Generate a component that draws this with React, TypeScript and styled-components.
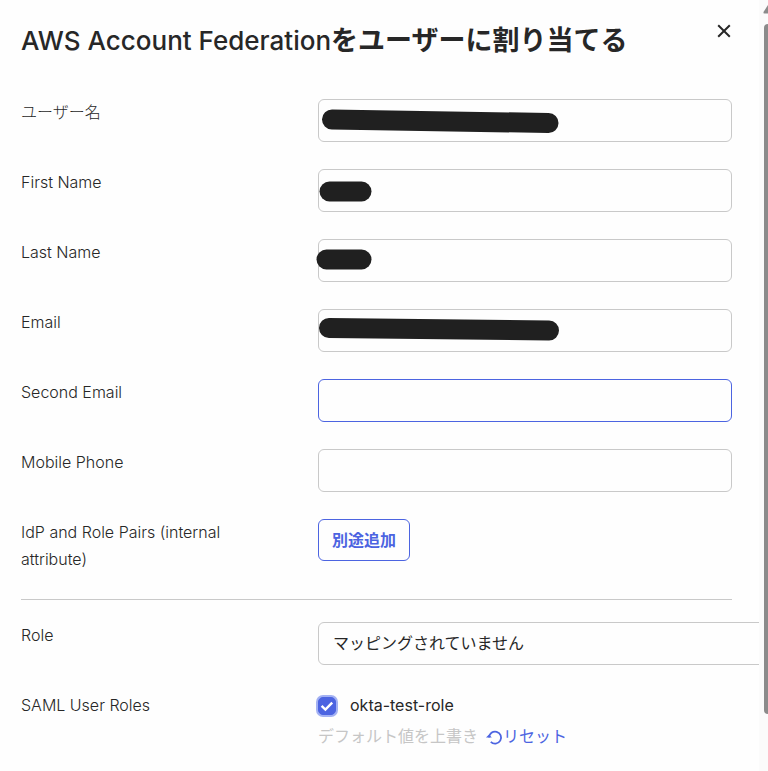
import React from "react";
import styled, { createGlobalStyle, css } from "styled-components";

const GlobalStyle = createGlobalStyle`
  *, *::before, *::after { box-sizing: border-box; }
  body {
    margin: 0;
    background: #fefefe;
    color: #272727;
    font-family: Inter, "Noto Sans CJK JP", sans-serif;
    font-size: 16px;
    line-height: 27px;
    overflow: hidden;
  }
  button, input, select { font: inherit; color: inherit; }
`;

const Page = styled.div`
  display: flex;
  height: 100vh;
  overflow: hidden;
`;

const Dialog = styled.main`
  flex: 1;
  min-width: 0;
  padding: 21px 27px 0 21px;
  overflow: hidden;
`;

const Header = styled.header`
  display: flex;
  justify-content: space-between;
  align-items: flex-start;
  margin-bottom: 38px;
`;

const Title = styled.h1`
  margin: 0;
  font-size: 26px;
  line-height: 40px;
  font-weight: 500;
  white-space: nowrap;
`;

const TitleStrong = styled.span`
  font-size: 27px;
  font-weight: 700;
`;

const CloseButton = styled.button`
  display: flex;
  padding: 3px 1px;
  border: 0;
  background: none;
  cursor: pointer;
`;

const Fields = styled.div`
  display: grid;
  gap: 27px;
`;

const Row = styled.div`
  display: grid;
  grid-template-columns: 297px minmax(0, 1fr);
  align-items: start;
`;

const labelText = css`
  padding-right: 32px;
  font-weight: 300;
`;

const Label = styled.label`
  ${labelText}
`;

const GroupLabel = styled.span`
  ${labelText}
`;

const Control = styled.div`
  position: relative;
  display: flex;
`;

const TextInput = styled.input<{ $active?: boolean }>`
  width: 100%;
  height: 43px;
  padding: 0 14px;
  border: 1px solid ${(p) => (p.$active ? "#4c64e1" : "#c9c9c9")};
  border-radius: 6px;
  background: #fefefe;
  outline: none;
`;

const Marker = styled.svg`
  position: absolute;
  top: 0;
  left: -4px;
  width: 260px;
  height: 43px;
  pointer-events: none;
`;

const AddButton = styled.button`
  height: 42px;
  padding: 0 13px;
  border: 1px solid #4c64e1;
  border-radius: 6px;
  background: #fefefe;
  color: #4c64e1;
  font-weight: 700;
  cursor: pointer;
`;

const Divider = styled.hr`
  margin: 26px 0 22px;
  border: 0;
  border-top: 1px solid #c9c9c9;
`;

const RoleSelect = styled.select`
  flex: none;
  width: calc(100% + 60px);
  height: 43px;
  padding: 0 14px;
  border: 1px solid #c9c9c9;
  border-radius: 6px;
  background: #fefefe;
  appearance: none;
`;

const RoleOptions = styled.div`
  display: grid;
  gap: 4px;
`;

const CheckLabel = styled.label`
  display: flex;
  align-items: center;
  gap: 14px;
`;

const CheckWrap = styled.span`
  position: relative;
  display: flex;
`;

const Checkbox = styled.input`
  appearance: none;
  width: 18px;
  height: 18px;
  margin: 0;
  border: 1px solid #8c8c96;
  border-radius: 5px;
  box-shadow: 0 0 0 2px #a3b1f3;
  &:checked {
    border-color: #4c64e1;
    background: #4c64e1;
  }
`;

const CheckMark = styled.svg`
  position: absolute;
  inset: 0;
  pointer-events: none;
`;

const Override = styled.div`
  display: flex;
  gap: 8px;
  white-space: nowrap;
`;

const Muted = styled.span`
  color: #c6c6c6;
`;

const ResetLink = styled.a`
  display: flex;
  align-items: center;
  color: #4c64e1;
  text-decoration: none;
`;

const Track = styled.div`
  flex: none;
  display: flex;
  flex-direction: column;
  align-items: flex-end;
  width: 9px;
  background: #fbfbfb;
`;

const ArrowUp = styled.svg`
  flex: none;
  display: block;
  margin: 4px 0 10px;
`;

const Thumb = styled.div`
  flex: none;
  width: 4px;
  height: calc(90vh - 4px);
  border-radius: 4px 0 0 4px;
  background: #8b8b8b;
`;

type Stroke = { x1: number; y1: number; x2: number; y2: number };

type Field = { id: string; label: string; stroke?: Stroke; active?: boolean };

const fields: Field[] = [
  { id: "username", label: "ユーザー名", stroke: { x1: 18, y1: 20.5, x2: 234.5, y2: 24 } },
  { id: "first-name", label: "First Name", stroke: { x1: 15.5, y1: 22.5, x2: 47.5, y2: 22.5 } },
  { id: "last-name", label: "Last Name", stroke: { x1: 12.5, y1: 20.5, x2: 47.5, y2: 20.5 } },
  { id: "email", label: "Email", stroke: { x1: 15, y1: 19, x2: 235, y2: 21.5 } },
  { id: "second-email", label: "Second Email", active: true },
  { id: "mobile-phone", label: "Mobile Phone" },
];

export default function App() {
  return (
    <>
      <GlobalStyle />
      <Page>
        <Dialog>
          <Header>
            <Title>
              AWS Account Federation<TitleStrong>をユーザーに割り当てる</TitleStrong>
            </Title>
            <CloseButton type="button" aria-label="閉じる">
              <svg width="14" height="14" viewBox="0 0 14 14" fill="none" stroke="#272727" strokeWidth="2">
                <path d="M1.2 1.2 12.8 12.8M12.8 1.2 1.2 12.8" />
              </svg>
            </CloseButton>
          </Header>

          <Fields>
            {fields.map((f) => (
              <Row key={f.id}>
                <Label htmlFor={f.id}>{f.label}</Label>
                <Control>
                  <TextInput id={f.id} type="text" $active={f.active} />
                  {f.stroke && (
                    <Marker aria-hidden="true">
                      <line {...f.stroke} stroke="#202020" strokeWidth="20" strokeLinecap="round" />
                    </Marker>
                  )}
                </Control>
              </Row>
            ))}
            <Row>
              <GroupLabel>IdP and Role Pairs (internal attribute)</GroupLabel>
              <Control>
                <AddButton type="button">別途追加</AddButton>
              </Control>
            </Row>
          </Fields>

          <Divider />

          <Fields>
            <Row>
              <Label htmlFor="role">Role</Label>
              <Control>
                <RoleSelect id="role">
                  <option>マッピングされていません</option>
                </RoleSelect>
              </Control>
            </Row>
            <Row>
              <GroupLabel>SAML User Roles</GroupLabel>
              <RoleOptions>
                <CheckLabel>
                  <CheckWrap>
                    <Checkbox type="checkbox" defaultChecked />
                    <CheckMark width="18" height="18" viewBox="0 0 18 18" fill="none" stroke="#fff" strokeWidth="2.4">
                      <path d="M3.6 8.8 7.4 12.6 14.2 5.6" />
                    </CheckMark>
                  </CheckWrap>
                  okta-test-role
                </CheckLabel>
                <Override>
                  <Muted>デフォルト値を上書き</Muted>
                  <ResetLink href="#reset">
                    <svg width="17" height="16" viewBox="0 0 17 16" fill="none">
                      <path d="M3.1 8.6A6 6 0 1 1 4.8 12.8" stroke="#4c64e1" strokeWidth="1.8" />
                      <path d="M0 8.6 3 5.4 5.8 8.6Z" fill="#4c64e1" />
                    </svg>
                    リセット
                  </ResetLink>
                </Override>
              </RoleOptions>
            </Row>
          </Fields>
        </Dialog>
        <Track aria-hidden="true">
          <ArrowUp width="5" height="10" viewBox="0 0 5 10">
            <path d="M5 1 0.5 8Q0 9.5 1.5 9.5H5Z" fill="#8b8b8b" />
          </ArrowUp>
          <Thumb />
        </Track>
      </Page>
    </>
  );
}
